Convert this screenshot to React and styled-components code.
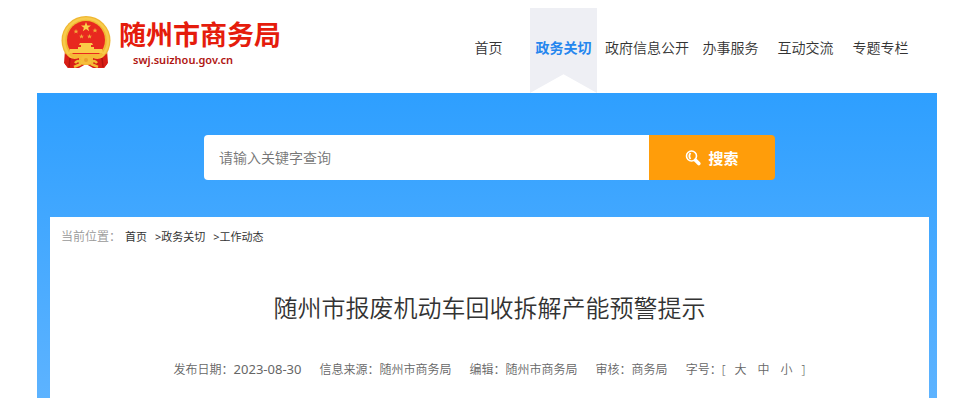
import React from 'react';
import styled, { createGlobalStyle } from 'styled-components';

const navItems = [
  { label: '首页' },
  { label: '政务关切', active: true },
  { label: '政府信息公开' },
  { label: '办事服务' },
  { label: '互动交流' },
  { label: '专题专栏' },
];

const meta = [
  { label: '信息来源', value: '随州市商务局' },
  { label: '编辑', value: '随州市商务局' },
  { label: '审核', value: '商务局' },
];

// National emblem shown next to the site name
const Emblem = () => (
  <svg width="50" height="52" viewBox="0 0 50 52" aria-hidden="true">
    <path d="M4 34 L3 47 L7 52 H18 L25 48 L32 52 H43 L47 47 L46 34 Z" fill="#d81e16" />
    <circle cx="25" cy="24.500" r="24.500" fill="#f0b732" />
    <circle cx="25" cy="24.500" r="22" fill="none" stroke="#f7cb4c" strokeWidth="2.500" />
    <circle cx="25" cy="24" r="19" fill="#e8281f" />
    <path d="M25 6 L26.300 9.500 H30 L27.100 11.700 L28.200 15.200 L25 13.100 L21.800 15.200 L22.900 11.700 L20 9.500 H23.700 Z" fill="#fbd04a" />
    <g fill="#f2a93b">
      <path id="star" d="M15 13 L15.700 14.700 H17.500 L16.100 15.800 L16.600 17.500 L15 16.500 L13.400 17.500 L13.900 15.800 L12.500 14.700 H14.300 Z" />
      <use href="#star" x="19" y="-1" />
      <use href="#star" x="5.500" y="5" />
      <use href="#star" x="13.500" y="5" />
    </g>
    <path d="M19 27 H31 L32 29 H30 V31 H33 V33 H17 V31 H20 V29 H18 Z" fill="#fbcb48" />
    <path d="M9 33 H41 L42 37 H8 Z" fill="#fbcb48" />
    <path d="M7 38 H43 L38 43 H12 Z" fill="#f6b936" />
    <path d="M5 38 Q10 45 18 42 L18 52 H7 L4 48 Z M45 38 Q40 45 32 42 L32 52 H43 L46 48 Z" fill="#d81e16" />
    <path d="M9 42 L8 51 M41 42 L42 51" stroke="#b5130f" strokeWidth="1.500" />
    <circle cx="25" cy="44" r="5" fill="#f6bd3a" />
    <circle cx="25" cy="44" r="2" fill="#eda02c" />
    <path d="M14 47 Q17 43 20 47 M30 47 Q33 43 36 47 M13 51 L20 48 M37 51 L30 48" fill="none" stroke="#f3bd35" strokeWidth="2.500" />
  </svg>
);

const SearchIcon = () => (
  <svg width="16" height="16" viewBox="0 0 16 16" fill="none" stroke="#fff" aria-hidden="true">
    <circle cx="6.500" cy="6" r="5" strokeWidth="1.600" />
    <path d="M5.500 3 Q3.200 6 5.500 9" strokeWidth="1.800" />
    <path d="M10.500 10.200 L13.800 13.500" strokeWidth="3.600" strokeLinecap="round" />
  </svg>
);

const App = () => (
  <>
    <GlobalStyle />
    <Page>
      <Header>
        <Brand href="/">
          <Emblem />
          <BrandText>
            <BrandName>随州市商务局</BrandName>
            <BrandUrl>swj.suizhou.gov.cn</BrandUrl>
          </BrandText>
        </Brand>
        <Nav>
          {navItems.map(({ label, active }) => (
            <NavLink key={label} href="#" $active={active}>{label}</NavLink>
          ))}
        </Nav>
      </Header>
      <Main>
        <SearchForm onSubmit={(e) => e.preventDefault()}>
          <SearchInput type="text" aria-label="请输入关键字查询" placeholder="请输入关键字查询" />
          <SearchButton type="submit">
            <SearchIcon />
            搜索
          </SearchButton>
        </SearchForm>
        <Article>
          <Breadcrumb>
            <CrumbLabel>当前位置：</CrumbLabel>
            <CrumbList>
              <CrumbLink href="#">首页</CrumbLink>
              <CrumbLink href="#">&gt;政务关切</CrumbLink>
              <CrumbLink href="#">&gt;工作动态</CrumbLink>
            </CrumbList>
          </Breadcrumb>
          <Title>随州市报废机动车回收拆解产能预警提示</Title>
          <Meta>
            <span>发布日期：<PublishDate dateTime="2023-08-30">2023-08-30</PublishDate></span>
            {meta.map(({ label, value }) => (
              <span key={label}>{label}：{value}</span>
            ))}
            <FontSizes>
              <span>字号：[</span>
              <SizeButton type="button">大</SizeButton>
              <SizeButton type="button">中</SizeButton>
              <SizeButton type="button">小</SizeButton>
              <span>]</span>
            </FontSizes>
          </Meta>
        </Article>
      </Main>
    </Page>
  </>
);

const GlobalStyle = createGlobalStyle`
  * {
    box-sizing: border-box;
  }
  body {
    margin: 0;
    background: #fff;
    color: #333;
    font-family: 'Noto Sans', 'Noto Sans CJK SC', sans-serif;
    font-size: 12px;
    font-weight: 350;
  }
  a {
    color: inherit;
    text-decoration: none;
  }
  button, input {
    font: inherit;
    color: inherit;
    border: none;
    outline: none;
  }
`;

const Page = styled.div`
  padding: 0 16px 3px 37px;
`;

const Header = styled.header`
  display: flex;
  justify-content: space-between;
  align-items: flex-start;
  padding: 8px 23px 0 24px;
`;

const Brand = styled.a`
  display: flex;
  gap: 8px;
  padding-top: 8px;
`;

const BrandText = styled.div`
  display: flex;
  flex-direction: column;
  white-space: nowrap;
`;

const BrandName = styled.span`
  color: #e51c0c;
  font-size: 27px;
  font-weight: 700;
  line-height: 38px;
`;

const BrandUrl = styled.span`
  padding-left: 14px;
  color: #b01512;
  font-size: 11px;
  font-weight: 600;
  line-height: 12px;
`;

const Nav = styled.nav`
  display: flex;
  gap: 8px;
`;

const NavLink = styled.a`
  min-width: 67px;
  height: 85px;
  color: ${({ $active }) => ($active ? '#2586ee' : '#333')};
  background: ${({ $active }) => ($active ? '#eeeff4' : 'transparent')};
  clip-path: ${({ $active }) => ($active ? 'polygon(0 0, 100% 0, 100% 100%, 50% 78%, 0 100%)' : 'none')};
  font-size: 14px;
  font-weight: ${({ $active }) => ($active ? 700 : 350)};
  line-height: 80px;
  text-align: center;
  white-space: nowrap;
`;

const Main = styled.main`
  padding: 42px 8px 0 13px;
  background: linear-gradient(#2e9fff, #5db3ff);
`;

const SearchForm = styled.form`
  display: flex;
  max-width: 571px;
  height: 45px;
  margin: 0 auto 37px;
  border-radius: 4px;
  overflow: hidden;
`;

const SearchInput = styled.input`
  flex: 1;
  min-width: 0;
  padding: 0 15px;
  background: #fff;
  font-size: 14px;
  &::placeholder {
    color: #757575;
    opacity: 1;
  }
`;

const SearchButton = styled.button`
  display: flex;
  align-items: center;
  justify-content: center;
  gap: 7px;
  width: 126px;
  padding: 0;
  background: #ff9d0a;
  color: #fff;
  font-size: 15px;
  font-weight: 700;
  cursor: pointer;
`;

const Article = styled.article`
  padding: 11px 11px 18px;
  background: #fff;
`;

const Breadcrumb = styled.nav`
  display: flex;
  align-items: center;
  gap: 4px;
  line-height: 18px;
`;

const CrumbLabel = styled.span`
  color: #999;
`;

const CrumbList = styled.div`
  display: flex;
  gap: 8px;
`;

const CrumbLink = styled.a`
  font-size: 11px;
  font-weight: 400;
`;

const Title = styled.h1`
  margin: 43px 0 32px;
  font-size: 24px;
  font-weight: 350;
  line-height: 38px;
  text-align: center;
`;

const Meta = styled.div`
  display: flex;
  flex-wrap: wrap;
  justify-content: center;
  align-items: baseline;
  gap: 18px;
  color: #666;
  line-height: 20px;
`;

const PublishDate = styled.time`
  font-size: 13px;
  font-weight: 400;
`;

const FontSizes = styled.span`
  display: flex;
  align-items: baseline;
  gap: 7px;
`;

const SizeButton = styled.button`
  padding: 0 2px;
  background: none;
  line-height: 20px;
  cursor: pointer;
`;

export default App;
